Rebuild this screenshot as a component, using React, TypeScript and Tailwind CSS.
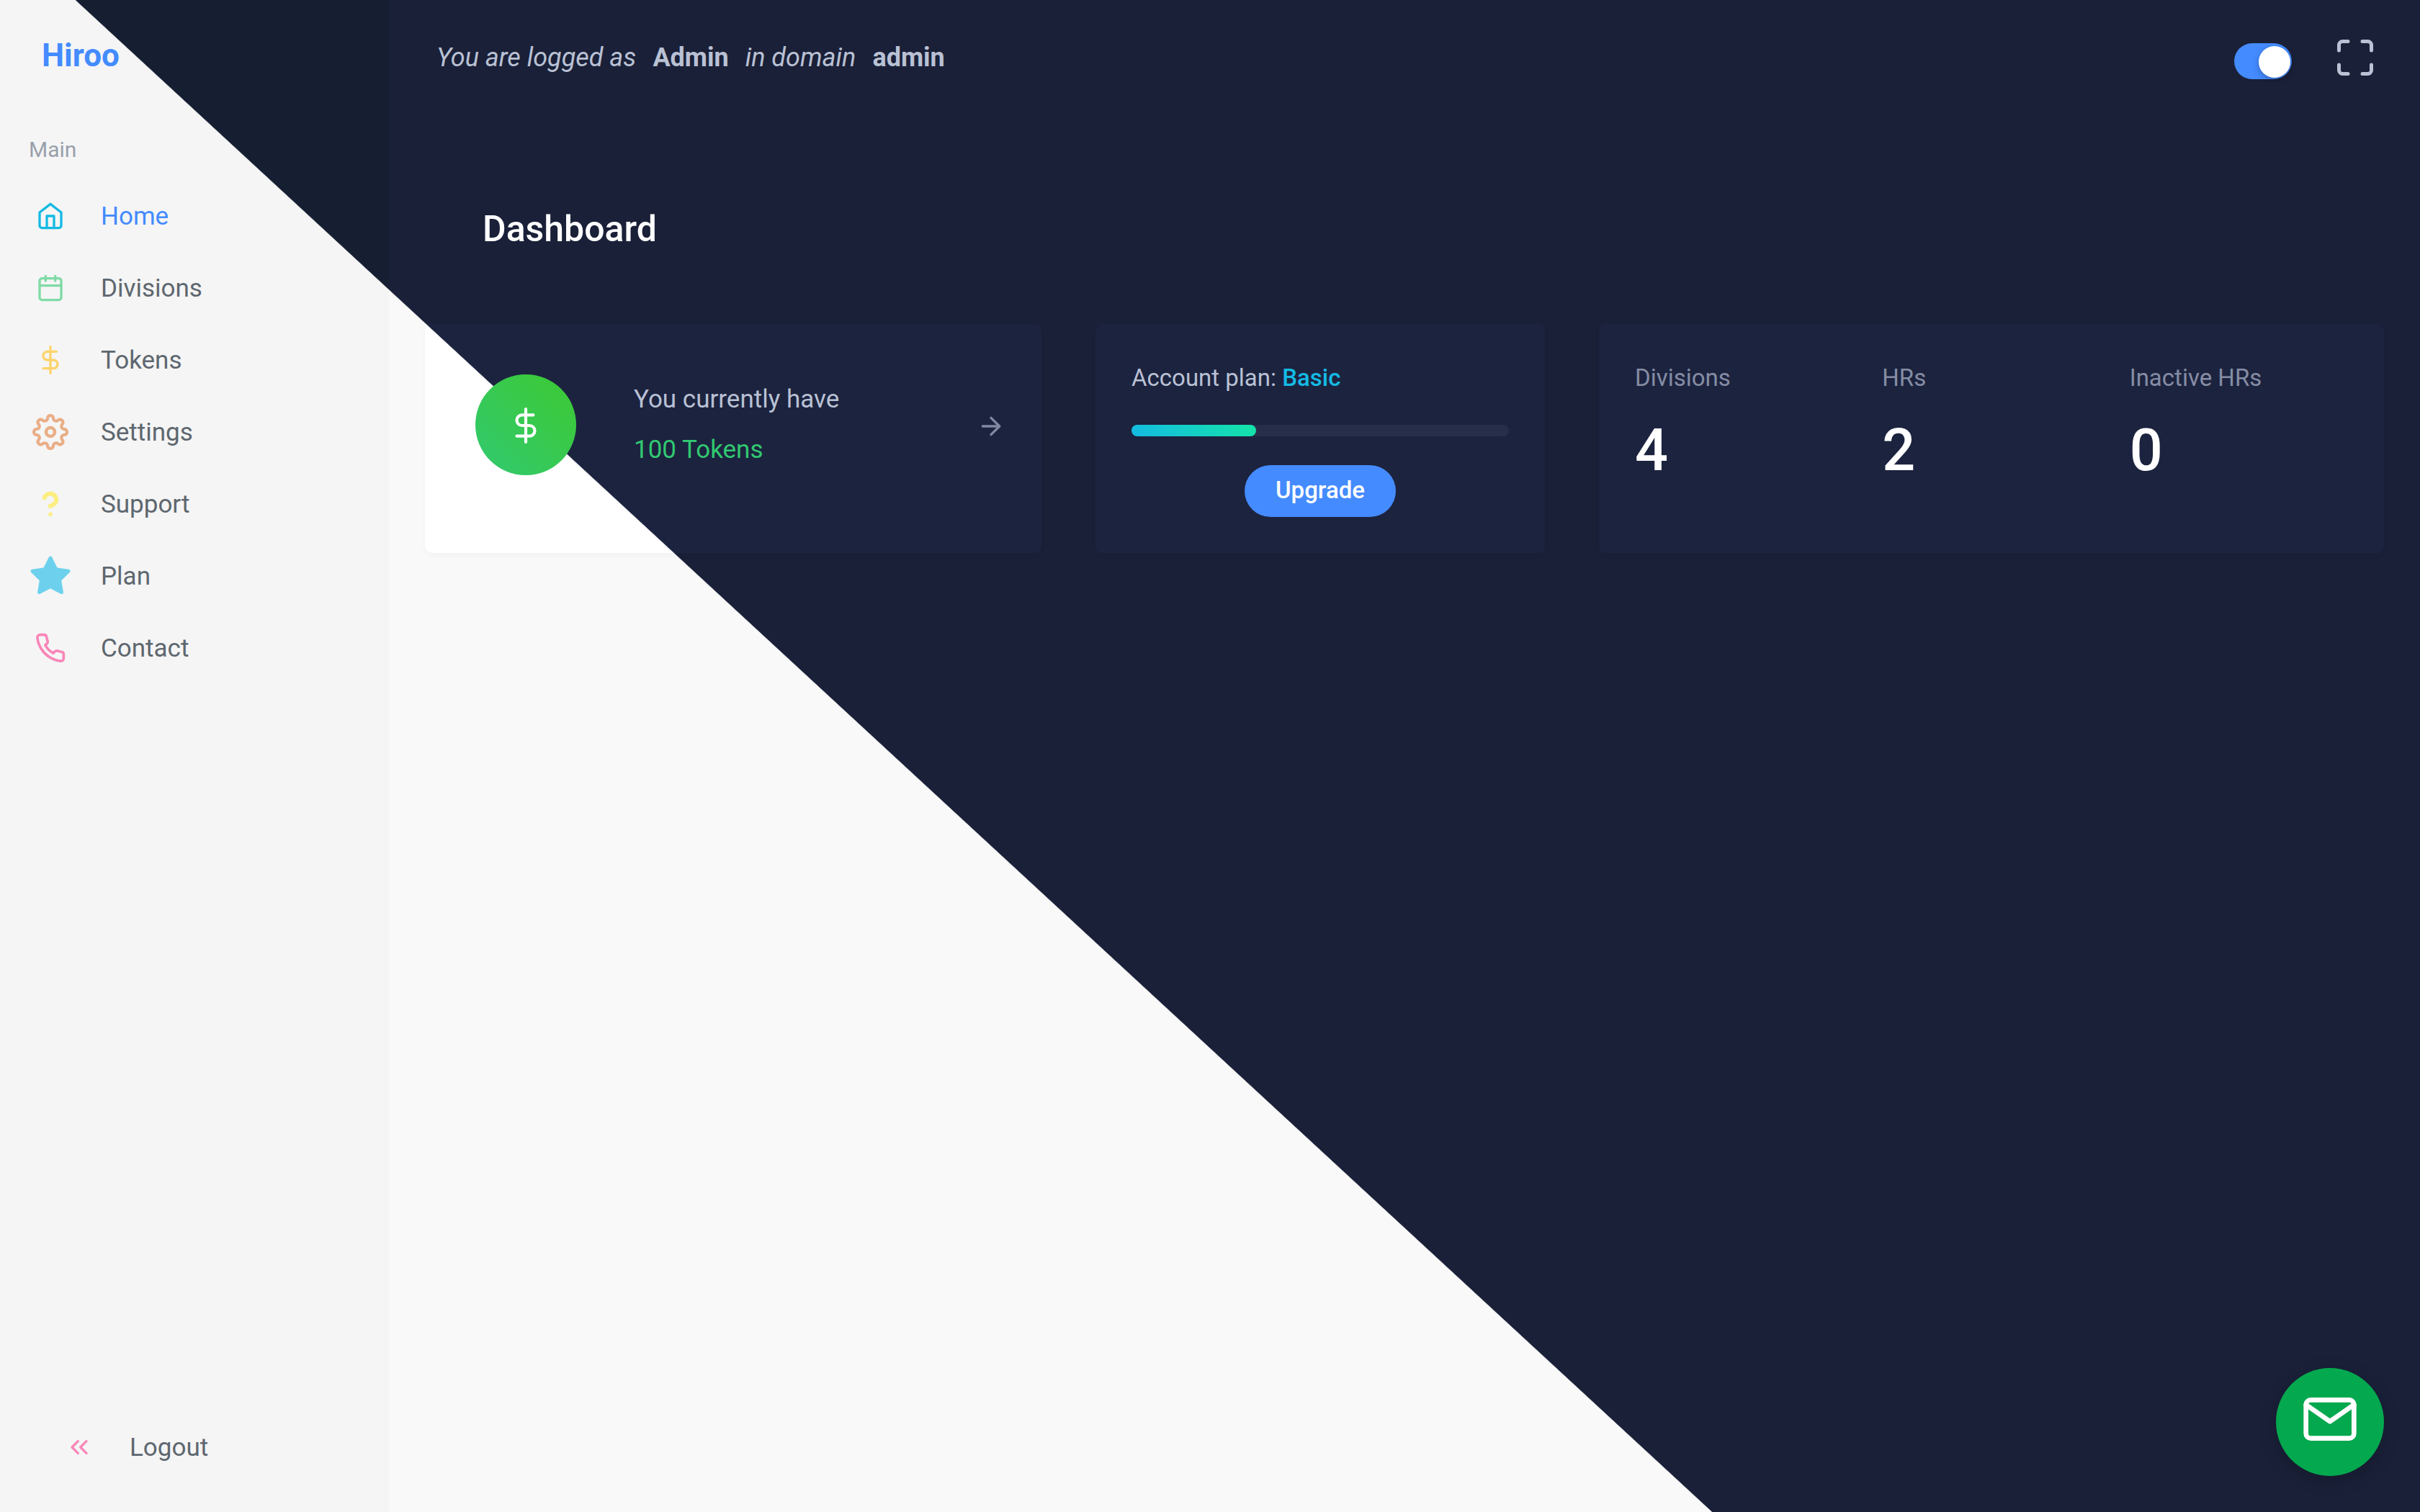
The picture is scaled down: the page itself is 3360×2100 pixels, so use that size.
import { useState } from "react";
import type { ReactNode } from "react";
import {
  FiArrowRight,
  FiCalendar,
  FiChevronsLeft,
  FiDollarSign,
  FiHome,
  FiMail,
  FiMaximize,
  FiPhone,
  FiStar,
} from "react-icons/fi";

/* Every surface carries the same viewport-fixed diagonal, light below and dark above. */
const PAGE_SURFACE =
  "bg-fixed bg-[linear-gradient(42.74deg,#f9f9f9_42.19%,#1a2038_42.22%)]";
const SIDEBAR_SURFACE =
  "bg-fixed bg-[linear-gradient(42.74deg,#f5f5f5_42.19%,#161e32_42.22%)]";
const CARD_SURFACE =
  "bg-fixed bg-[linear-gradient(42.74deg,#ffffff_42.19%,#1c233f_42.22%)]";

function gearOutline(): string {
  const points: string[] = [];
  const steps = 320;
  for (let i = 0; i < steps; i++) {
    const t = (i / steps) * Math.PI * 2;
    const radius = 19.9 + 3 * Math.cos(8 * t);
    const angle = t + 0.035 * Math.sin(16 * t);
    points.push(
      `${(25 + radius * Math.sin(angle)).toFixed(2)} ${(25 - radius * Math.cos(angle)).toFixed(2)}`
    );
  }
  return `M${points.join("L")}Z`;
}

const GEAR_PATH = gearOutline();

function GearIcon() {
  return (
    <svg viewBox="0 0 50 50" className="size-[50px]" fill="none" stroke="currentColor" strokeWidth="4.2" strokeLinejoin="round" aria-hidden="true">
      <path d={GEAR_PATH} />
      <circle cx="25" cy="25" r="6" strokeWidth="4.6" />
    </svg>
  );
}

function QuestionIcon() {
  return (
    <svg viewBox="5 5 14 14" className="size-10" fill="none" stroke="currentColor" strokeWidth="2.1" strokeLinecap="round" strokeLinejoin="round" aria-hidden="true">
      <path d="M9.09 9a3 3 0 0 1 5.83 1c0 2-3 3-3 3" />
      <path d="M12 17h.01" strokeWidth="1.9" />
    </svg>
  );
}

type NavItem = { label: string; icon: ReactNode; iconColor: string; active?: boolean };

const NAV_ITEMS: NavItem[] = [
  { label: "Home", icon: <FiHome className="size-10" />, iconColor: "text-[#14bae4]", active: true },
  { label: "Divisions", icon: <FiCalendar className="size-10" />, iconColor: "text-[#7fdba6]" },
  { label: "Tokens", icon: <FiDollarSign className="size-10" />, iconColor: "text-[#fdd46b]" },
  { label: "Settings", icon: <GearIcon />, iconColor: "text-[#e9ae87]" },
  { label: "Support", icon: <QuestionIcon />, iconColor: "text-[#fcee80]" },
  { label: "Plan", icon: <FiStar className="size-[60px] fill-current" />, iconColor: "text-[#6dd1ed]" },
  { label: "Contact", icon: <FiPhone className="size-11" />, iconColor: "text-[#f986b9]" },
];

function NavLink({ label, icon, iconColor, active }: NavItem) {
  return (
    <a
      href="#"
      aria-current={active ? "page" : undefined}
      className={`flex h-[100px] items-center gap-10 text-[35px] ${active ? "text-[#448bff]" : "text-[#5e676f]"}`}
    >
      <span className={`flex w-[60px] shrink-0 items-center justify-center ${iconColor}`}>{icon}</span>
      <span className="pt-0.5">{label}</span>
    </a>
  );
}

function Sidebar() {
  return (
    <aside className={`flex w-[540px] shrink-0 flex-col ${SIDEBAR_SURFACE}`}>
      <a href="#" className="flex h-40 items-center px-[58px] pb-1.5 text-[44px] font-bold text-[#448bff]">
        Hiroo
      </a>
      <nav aria-label="Main" className="px-10">
        <p className="flex h-[90px] items-center pt-1 text-[30px] text-[#99a0ac]">Main</p>
        {NAV_ITEMS.map((item) => (
          <NavLink key={item.label} {...item} />
        ))}
      </nav>
      <div className="mt-auto px-20 pb-10">
        <NavLink label="Logout" icon={<FiChevronsLeft className="size-10" />} iconColor="text-[#f986b9]" />
      </div>
    </aside>
  );
}

function Header() {
  const [dark, setDark] = useState(true);
  return (
    <header className="flex h-40 items-center justify-between pr-[60px] pl-[66px] text-[#b9c1d4]">
      <p className="flex items-center gap-[23px] text-[36px]">
        <em>You are logged as</em>
        <strong>Admin</strong>
        <em>in domain</em>
        <strong>admin</strong>
      </p>
      <div className="flex items-end gap-[58px]">
        <input
          type="checkbox"
          role="switch"
          aria-label="Dark mode"
          checked={dark}
          onChange={(e) => setDark(e.target.checked)}
          className="flex h-[50px] w-20 cursor-pointer appearance-none items-center rounded-full bg-[#3a415a] px-0.5 pt-0.5 before:size-11 before:rounded-full before:bg-white before:shadow-[0_3px_8px_rgba(0,0,0,0.25)] checked:justify-end checked:bg-[#448bff]"
        />
        <button type="button" aria-label="Full screen">
          <FiMaximize className="size-[60px]" />
        </button>
      </div>
    </header>
  );
}

function Card({ className, children }: { className: string; children: ReactNode }) {
  return (
    <section className={`rounded-[10px] shadow-[0_4px_10px_rgba(0,0,0,0.03)] ${CARD_SURFACE} ${className}`}>
      {children}
    </section>
  );
}

function TokensCard() {
  return (
    <Card className="flex items-center gap-20 pr-[50px] pb-[38px] pl-[70px]">
      <div className="flex size-[140px] shrink-0 items-center justify-center rounded-full bg-[linear-gradient(45deg,#31c971,#3dc931)] pt-0.5 text-white">
        <FiDollarSign className="size-[50px]" />
      </div>
      <div className="flex-1 text-[35px] leading-[70px]">
        <p className="text-[#b9c1d4]">You currently have</p>
        <p className="text-[#31c971]">100 Tokens</p>
      </div>
      <a href="#" aria-label="Open tokens" className="pt-1 text-[#8088a0]">
        <FiArrowRight className="size-10" />
      </a>
    </Card>
  );
}

function PlanCard() {
  return (
    <Card className="flex flex-col p-[50px] text-[33px] leading-[50px]">
      <p className="text-[#b9c1d4]">
        Account plan: <span className="font-medium text-[#14bae4]">Basic</span>
      </p>
      <div
        role="progressbar"
        aria-label="Plan usage"
        aria-valuenow={33}
        aria-valuemin={0}
        aria-valuemax={100}
        className="mt-10 h-4 rounded-full bg-[#272e49]"
      >
        <div className="h-full w-[33%] rounded-full bg-[linear-gradient(45deg,#14bae4,#14e4a6)]" />
      </div>
      <button type="button" className="mt-10 h-[72px] self-center rounded-full bg-[#448bff] px-[43px] pb-0.5 font-medium text-white">
        Upgrade
      </button>
    </Card>
  );
}

const STATS = [
  { label: "Divisions", value: 4 },
  { label: "HRs", value: 2 },
  { label: "Inactive HRs", value: 0 },
];

function StatsCard() {
  return (
    <Card className="p-[50px]">
      <dl className="grid grid-cols-3 gap-10">
        {STATS.map((stat) => (
          <div key={stat.label}>
            <dt className="text-[33px] leading-[50px] text-[#858da4]">{stat.label}</dt>
            <dd className="pt-[26px] text-[81px] leading-[100px] font-medium text-white">{stat.value}</dd>
          </div>
        ))}
      </dl>
    </Card>
  );
}

export default function App() {
  return (
    <div className={`flex min-h-screen font-[Roboto,sans-serif] ${PAGE_SURFACE}`}>
      <Sidebar />
      <div className="min-w-0 flex-1">
        <Header />
        <main className="px-[50px]">
          <h1 className="px-20 pt-32 pb-[102px] text-[50px] leading-[60px] font-medium text-white">Dashboard</h1>
          <div className="grid grid-cols-[428fr_312fr_545fr] gap-[75px]">
            <TokensCard />
            <PlanCard />
            <StatsCard />
          </div>
        </main>
      </div>
      <button
        type="button"
        aria-label="Messages"
        className="fixed right-[50px] bottom-[50px] flex size-[150px] items-center justify-center rounded-full bg-[#04a84e] pb-2 text-white shadow-[0_6px_24px_rgba(0,0,0,0.2)]"
      >
        <FiMail className="size-20" />
      </button>
    </div>
  );
}
